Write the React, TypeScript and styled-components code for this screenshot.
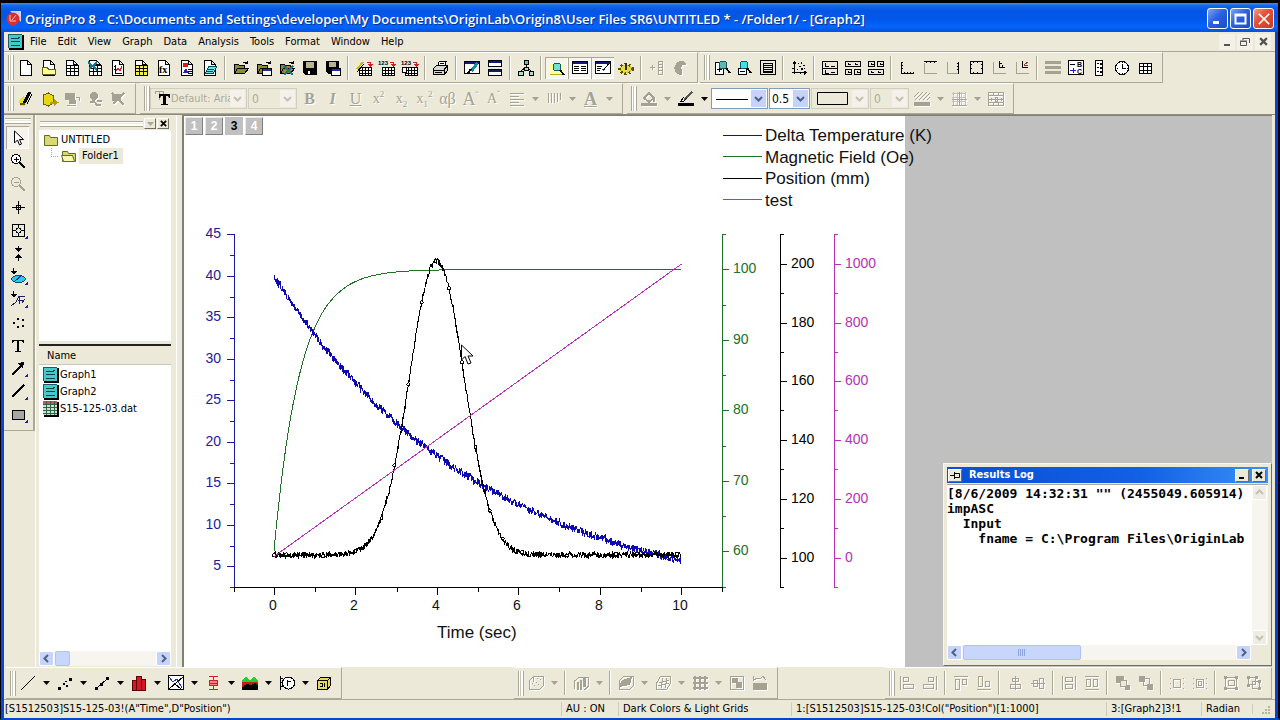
import React from 'react';
import styled, { createGlobalStyle, css } from 'styled-components';

const face = '#ece9d8';
const shade = '#aca899';
const uiFont = '"DejaVu Sans Condensed", "Liberation Sans", sans-serif';

const Global = createGlobalStyle`
  * { box-sizing: border-box; }
  body { margin: 0; background: #000; font: 11px/14px ${uiFont}; color: #000; }
  button, select { font: inherit; color: inherit; padding: 0; margin: 0; border: 0; background: none; }
  svg { display: block; flex: none; }
`;

/* ---------- window frame ---------- */

const Frame = styled.div`
  display: flex;
  flex-direction: column;
  height: 100vh;
  min-height: 560px;
  background: ${face};
  border-style: solid;
  border-color: #000 #000 #0b44c4;
  border-width: 3px 2px 2px 1px;
  box-shadow: inset 3px 0 #0b44d8, inset -3px 0 #0b3fd0;
  padding: 0 3px;
  overflow: hidden;
`;

const TitleBar = styled.header`
  display: flex;
  align-items: center;
  gap: 4px;
  height: 29px;
  flex: none;
  margin: 0 -3px;
  padding: 2px 4px 0 5px;
  background: linear-gradient(#3a8cf8 0, #1464e8 3px, #0455e4 8px, #0258ea 16px, #0464fc 24px, #0354e0 28px);
`;

const TitleText = styled.h1`
  flex: 1;
  margin: 0;
  font: 600 13px/18px "Open Sans", sans-serif;
  color: #fff;
  text-shadow: 1px 1px #0a2f8c;
  white-space: nowrap;
  overflow: hidden;
`;

const CaptionGroup = styled.div`
  display: flex;
  gap: 2px;
`;

const Caption = styled.button<{ $close?: boolean }>`
  width: 21px;
  height: 21px;
  display: grid;
  place-items: center;
  border: 1px solid #fff;
  border-radius: 3px;
  background: ${p => (p.$close
    ? 'linear-gradient(135deg, #f0a088, #e0533a 40%, #c83c1c)'
    : 'linear-gradient(135deg, #7fa6f4, #2c62dc 45%, #1c4cc8)')};
`;

const MenuBar = styled.nav`
  display: flex;
  align-items: center;
  gap: 1px;
  height: 20px;
  flex: none;
  padding: 0 4px;
  border-bottom: 1px solid ${shade};
`;

const MenuItem = styled.button`
  padding: 0 5px;
  line-height: 18px;
`;

const ChildButtons = styled.div`
  display: flex;
  gap: 2px;
  margin-left: auto;
`;

const ChildButton = styled.button`
  width: 16px;
  height: 16px;
  display: grid;
  place-items: center;
  background: #f4f2e8;
`;

/* ---------- toolbars ---------- */

const ToolRow = styled.div<{ $ruled?: boolean; $tall?: boolean }>`
  display: flex;
  flex: none;
  height: ${p => (p.$tall ? 32 : 31)}px;
  ${p => p.$ruled && css`border-bottom: 1px solid #8f8c7e;`}
`;

const Bar = styled.div<{ $gap?: number; $end?: boolean }>`
  display: flex;
  align-items: center;
  padding: 0 6px 0 4px;
  margin-left: ${p => (p.$end ? 'auto' : `${p.$gap || 0}px`)};
  margin-right: ${p => (p.$end ? 3 : 0)}px;
  border-top: 1px solid #fff;
  border-right: 1px solid ${shade};
  border-bottom: 1px solid ${shade};
  flex: none;
`;

const Grip = styled.span`
  width: 6px;
  height: 25px;
  flex: none;
  border: solid ${shade};
  border-width: 0 1px;
  box-shadow: inset 1px 0 #fff, inset -2px 0 #fff, inset -3px 0 #c9c5b4;
`;

const Divider = styled.span`
  width: 2px;
  height: 24px;
  margin: 0 3px;
  flex: none;
  border-left: 1px solid ${shade};
  border-right: 1px solid #fff;
`;

const Tool = styled.button<{ $pressed?: boolean; $off?: boolean }>`
  width: 23px;
  height: 22px;
  display: grid;
  place-items: center;
  flex: none;
  ${p => p.$pressed && css`
    background: #f6f4ec;
    box-shadow: inset 1px 1px ${shade}, inset -1px -1px #fff;
  `}
  ${p => p.$off && css`svg { filter: drop-shadow(1px 1px 0 #fff); }`}
`;

const Drop = styled.button`
  width: 14px;
  height: 22px;
  display: grid;
  place-items: center;
  flex: none;
`;

const Combo = styled.label<{ $w: number; $off?: boolean }>`
  position: relative;
  display: flex;
  align-items: center;
  width: ${p => p.$w}px;
  height: 21px;
  margin-right: 1px;
  flex: none;
  border: 1px solid ${p => (p.$off ? '#d2cebd' : '#7f9db9')};
  background: ${p => (p.$off ? face : '#fff')};
  color: ${p => (p.$off ? shade : '#000')};
`;

const ComboSelect = styled.select<{ $pad: number; $big?: boolean }>`
  appearance: none;
  flex: 1;
  min-width: 0;
  height: 19px;
  padding-left: ${p => p.$pad}px;
  font-size: ${p => (p.$big ? 12 : 11)}px;
  outline: 0;
  opacity: 1;
`;

const ComboArrow = styled.span<{ $off?: boolean }>`
  width: 15px;
  height: 17px;
  margin-right: 1px;
  flex: none;
  display: grid;
  place-items: center;
  pointer-events: none;
  background: ${p => (p.$off ? '#f3f1e9' : '#c5d3fb')};
`;

const Sample = styled.span`
  position: absolute;
  left: 4px;
  top: 1px;
  pointer-events: none;
`;

/* ---------- work area ---------- */

const Body = styled.main`
  display: flex;
  flex: 1;
  min-height: 0;
`;

const ToolBox = styled.div`
  display: flex;
  flex-direction: column;
  align-items: center;
  align-self: flex-start;
  width: 31px;
  padding: 3px 2px 5px 0;
  border-right: 2px solid ${shade};
  border-bottom: 1px solid ${shade};
  flex: none;
`;

const FlatGrip = styled.span<{ $grow?: boolean }>`
  ${p => (p.$grow ? css`flex: 1;` : css`width: 26px; margin-bottom: 2px;`)}
  height: 6px;
  border: solid ${shade};
  border-width: 1px 0;
  box-shadow: inset 0 1px #fff, inset 0 -2px #fff;
`;

const BoxTool = styled(Tool)`
  height: 23px;
`;

const Explorer = styled.aside`
  display: flex;
  flex-direction: column;
  width: 142px;
  padding: 2px 5px 1px 3px;
  border-left: 1px solid #fff;
  border-right: 1px solid #fff;
  flex: none;
`;

const ExplorerHead = styled.div`
  display: flex;
  align-items: center;
  gap: 1px;
  height: 13px;
  padding: 0 2px 0 1px;
  flex: none;
`;

const TinyButton = styled.button`
  width: 12px;
  height: 11px;
  display: grid;
  place-items: center;
  border: 1px solid;
  border-color: #fff #716f64 #716f64 #fff;
`;

const Tree = styled.ul`
  list-style: none;
  margin: 0;
  padding: 2px 0 0 4px;
  height: 211px;
  flex: none;
  background: #fff;
`;

const TreeItem = styled.li<{ $child?: boolean }>`
  display: flex;
  align-items: center;
  gap: 2px;
  height: 16px;
  padding-left: ${p => (p.$child ? 8 : 0)}px;
`;

const Selected = styled.span`
  background: ${face};
  padding: 1px 4px 1px 3px;
`;

const NameHeader = styled.div`
  margin-top: 3px;
  padding-left: 8px;
  height: 21px;
  line-height: 19px;
  flex: none;
  border-top: 2px solid #222;
  border-bottom: 1px solid #cbc7b8;
`;

const FileList = styled.ul`
  list-style: none;
  margin: 0;
  padding: 1px 0 0 4px;
  flex: 1;
  min-height: 0;
  overflow: hidden;
  background: #fff;
`;

const FileItem = styled.li`
  display: flex;
  align-items: center;
  gap: 1px;
  height: 17px;
`;

const Scroll = styled.div<{ $vertical?: boolean }>`
  display: flex;
  flex-direction: ${p => (p.$vertical ? 'column' : 'row')};
  justify-content: space-between;
  flex: none;
  ${p => (p.$vertical ? css`width: 16px;` : css`height: 15px;`)}
  background: #f6f5ef;
`;

const ScrollButton = styled.button<{ $off?: boolean }>`
  width: 15px;
  height: 15px;
  display: grid;
  place-items: center;
  flex: none;
  border: 1px solid #fff;
  border-radius: 2px;
  background: ${p => (p.$off ? '#efede3' : '#c6d3fb')};
`;

const Thumb = styled.span<{ $w: number }>`
  width: ${p => p.$w}px;
  margin: 0 auto 0 1px;
  display: grid;
  place-items: center;
  border: 1px solid #b0c2f4;
  border-radius: 2px;
  background: #c8d6fb;
`;

const Workspace = styled.section`
  position: relative;
  display: flex;
  flex: 1;
  min-width: 0;
  margin: 0 3px 0 5px;
  border: solid #808074;
  border-width: 1px 0 0 2px;
  background: #c0c0c0;
  overflow: hidden;
`;

const GraphPage = styled.div`
  flex: none;
  width: 721px;
  background: #fff;
`;

const LayerTabs = styled.div`
  position: absolute;
  left: 1px;
  top: 1px;
  display: flex;
  gap: 2px;
`;

const LayerTab = styled.button<{ $on?: boolean }>`
  width: 18px;
  height: 18px;
  font: 700 12px/16px "Liberation Sans", sans-serif;
  color: ${p => (p.$on ? '#000' : '#fff')};
  background: #c0c0c0;
  border: 1px solid;
  border-color: ${p => (p.$on ? '#c0c0c0' : '#e8e8e8 #808080 #808080 #e8e8e8')};
`;

const LogWindow = styled.section`
  position: absolute;
  right: 0;
  bottom: 1px;
  width: 329px;
  height: 203px;
  display: flex;
  flex-direction: column;
  padding: 3px 3px 5px 3px;
  background: ${face};
  border: 1px solid;
  border-color: #f8f7f2 #716f64 #716f64 #f8f7f2;
`;

const LogTitle = styled.header`
  display: flex;
  align-items: center;
  gap: 3px;
  height: 16px;
  padding: 0 2px 0 1px;
  flex: none;
  color: #fff;
  font-weight: 700;
  background: linear-gradient(90deg, #0a4fd4, #1260e4 60%, #3a90f8);
`;

const LogName = styled.h2`
  flex: 1;
  margin: 0 0 0 4px;
  font: 700 11px/14px ${uiFont};
`;

const LogButton = styled.button`
  width: 14px;
  height: 13px;
  display: grid;
  place-items: center;
  background: ${face};
  border: 1px solid;
  border-color: #fff #716f64 #716f64 #fff;
`;

const LogBody = styled.div`
  display: flex;
  flex: 1;
  min-height: 0;
  margin-top: 1px;
  border-top: 1px solid ${shade};
  background: #fff;
`;

const LogText = styled.pre`
  flex: 1;
  min-width: 0;
  margin: 0;
  padding: 1px 0;
  overflow: hidden;
  font: 700 13px/15px "DejaVu Sans Mono", monospace;
`;

const LogFoot = styled.div`
  padding-right: 17px;
`;

const StatusBar = styled.footer`
  display: flex;
  align-items: center;
  height: 19px;
  flex: none;
  border-top: 1px solid ${shade};
  padding: 0 1px;
  white-space: nowrap;
`;

const Status = styled.span<{ $w?: number }>`
  ${p => (p.$w ? css`width: ${p.$w}px; border-left: 1px solid #d0ccbc; padding-left: 4px;` : css`flex: 1;`)}
`;

/* ---------- icons ---------- */

type LineProps = { d: string; c?: string; f?: string; w?: number };
const L = ({ d, c = '#000', f = 'none', w = 1 }: LineProps) => (
  <path d={d} stroke={c} fill={f} strokeWidth={w} />
);
const F = ({ d, c = '#000' }: { d: string; c?: string }) => <path d={d} fill={c} />;
const G = '#a5a294';

const page = <L d="M2.5 .5h7l4 4v11h-11z M9.5 .5v4h4" f="#fff" />;
const pageGrid = (f: string) => (
  <>{page}<L d="M2.500 5.500h12v10h-12z" f={f} /><L d="M2 8.500h12M2 11.500h12M6.500 5v10M10.500 5v10" /></>
);
const folder = <L d="M1.500 13.500v-9h4l1 1h5v3M1.500 13.500l3-5h11l-4 5z" f="#8c8c2c" />;
const openArrow = <L d="M9.500 3.500c1-2 4-2 4.500 0M12 3.500h3M14.500 1v3" />;
const teal = '#107890';
const bigX = <L d="M5 6l9 9M14 6l-9 9" c={teal} w={2} />;
const sheet = <L d="M3.500 7.500h12v8h-12zM3 10.500h12M3 13.500h12M6.500 7v9M9.500 7v9M12.500 7v9" f="#fff" />;
const redArrow = <><L d="M11 2.500h3.500v2" c="#d02020" /><F d="M12 4h5l-2.500 3z" c="#d02020" /></>;
const digits = <text x="-1" y="5" fontSize="6" fontWeight="700" fontFamily="Liberation Sans, sans-serif">123</text>;
const win = (x: number, y: number) => (
  <><rect x={x + 0.5} y={y + 0.5} width="9" height="7" fill="#fff" stroke="#000" /><rect x={x + 1} y={y + 1} width="8" height="2" fill="#2030a0" /></>
);
const bigWin = <><L d="M.5 1.500h15v12H.500z" f="#fff" /><F d="M1 2h14v2H1z" c="#101878" /></>;
const lens = (x: number, y: number, c: string) => (
  <><circle cx={x} cy={y} r="4" fill={c} stroke="#105868" /><L d={`M${x + 3} ${y + 3}l4 5`} w={2} /></>
);
const corner = 'M2.500 2v11.500H15';
const cornerTicks = 'M3 4.500h2M3 7.500h2M3 10.500h2M5.500 11v2M8.500 11v2M11.500 11v2';

const art: Record<string, React.ReactNode> = {
  new: page,
  folder: <>{page}<L d="M1.500 14.500v-7h5l1 2h7v5z" f="#ffff90" c="#60601c" /></>,
  sheet: pageGrid('#fff'),
  excel: <>{pageGrid('#fff')}<L d="M1 2l9 8M10 2L2 9" c={teal} w={2} /></>,
  graph: <>{page}<L d="M5.500 5v8H12M4 6.500h2M4 9.500h2" /><L d="M6 10.500l2-2l2 2l2-4" c="#c82828" /></>,
  matrix: pageGrid('#f4f050'),
  fx: <>{page}<text x="3" y="13" fontSize="10" fontWeight="700" fontFamily="Liberation Serif, serif">fx</text></>,
  layout: <>{page}<F d="M4 3h5v4H4z" c="#e01818" /><F d="M4 13l3-5l3 5z" c="#1828b0" /><L d="M9 9.500h4M9 11.500h4M9 13.500h4" /></>,
  notes: <>{page}<L d="M3.500 13.500l3-7h8l-3 7z" f="#70e0e8" c="#084858" /><L d="M6 9.500h6M5 11.500h6" c="#084858" /></>,
  open: <>{folder}{openArrow}</>,
  openTpl: <>{folder}{openArrow}{win(6, 8)}</>,
  openXls: <>{folder}{openArrow}{bigX}</>,
  save: <><F d="M1 1h14v14H3l-2-2z" /><F d="M4 2h8v6H4z" c="#b8b48c" /><F d="M6 11h2v3H6z" c="#fff" /></>,
  saveTpl: <><F d="M1 1h13v13H3l-2-2z" /><F d="M4 2h7v5H4z" c="#b8b48c" />{win(6, 8)}</>,
  wizard: <>{sheet}{redArrow}<L d="M1 9l6-7" c="#c8b820" w={2} /><L d="M1 12l7-8" /></>,
  imp: <>{sheet}{redArrow}{digits}</>,
  imp2: <>{sheet}<L d="M.500 7.500h4v5h-4z" f="#fff" />{redArrow}{digits}</>,
  print: <><L d="M4.500 6l2-5h7l-2 5" f="#fff" /><L d="M.500 8.500l3-3h11v5l-3 4H.500z" f="#d8d8d0" /><L d="M1 10.500h10M11.500 14V9l3-3M7 3.500h4M2 12.500h7" /></>,
  redraw: <>{bigWin}<L d="M13.500 3l-6 8" c="#1888a0" w={3} /><L d="M7 9l-3 4" w={2} /></>,
  dup: <><L d="M1.500 .500h13v6h-13zM1.500 9.500h13v6h-13z" f="#fff" /><F d="M2 1h12v2H2zM2 10h12v2H2z" c="#101878" /></>,
  tree: <><L d="M8.500 5v2M8 7l-5 4M8 7l5 4" /><L d="M6.500 .500h4v4h-4z" f="#60c8a8" /><L d="M6.500 7.500h4v3h-4zM.500 11.500h5v4h-5zM11.500 11.500h4v4h-4z" f="#a8e0c8" /></>,
  find: <><F d="M1 4h14v9H1z" c="#ffffa0" /><L d="M1 14.500h15" c="#b8a820" />{lens(8, 7, '#70e0d8')}</>,
  log: <>{bigWin}<L d="M2 6.500h5M9 6.500h5M2 8.500h5M9 8.500h5M2 10.500h5M9 10.500h5" /></>,
  script: <>{bigWin}<L d="M2 6.500h5M2 8.500h4M2 10.500h3" /><L d="M13.500 4l-5 6" w={1} /><L d="M7 9l2 2" c={teal} /></>,
  gear: <><ellipse cx="8" cy="9" rx="6.500" ry="4.500" fill="#d8cc28" stroke="#585008" strokeDasharray="2 2" strokeWidth="3" /><ellipse cx="8" cy="9" rx="5" ry="3.500" fill="#e8dc38" /><F d="M7 3h2v7H7z" c="#302c08" /></>,
  addCol: <><L d="M1 7.500h5M3.500 5v5M9.500 1.500h4v13h-4zM9 4.500h5M9 7.500h5M9 10.500h5" c={G} /></>,
  ring: <F d="M13 2a7 7 0 1 0-3 13v-5a3 3 0 1 1 5-3z" c={G} />,
  zoomIn: <><L d="M1.500 2.500h5l3 3v9h-8zM3 9.500h5M5.500 7v5" f="#fff" />{lens(9, 5, '#60b8b0')}</>,
  zoomOut: <><L d="M1.500 8.500h8v6h-8zM3 11.500h5" f="#fff" />{lens(7, 5, '#40e0e8')}</>,
  whole: <><L d="M.500 .500h15v14H.500zM3.500 3.500h9v9h-9z" /><L d="M4 5.500h8M4 7.500h8M4 9.500h8M4 11.500h8" /></>,
  rescale: <><L d="M3.500 1v13M1 12.500h14M2 3.500l1.500-2l1.500 2M13 11l2 1.500l-2 2M1 8.500h2M9.500 12v2" /><F d="M7 3h1v1h-1zM10 2h1v2h-1zM12 5h2v1h-2zM8 6h2v1H8zM6 9h1v1h-1zM10 8h2v2h-2zM13 8h1v1h-1z" /></>,
  lay1: <><L d="M.500 1.500h15v13H.500zM0 8.500h15" /><L d="M3.500 3v3h3M9 6.500h4M3.500 10v3h3M9 12.500h4" /></>,
  lay2: <><L d="M.500 1.500h15v5H.500zM.500 9.500h6v5h-6zM9.500 9.500h6v5h-6z" /><L d="M3.500 3v1.500h2M10.500 3v1.500h2M3.500 11v1.500h2M12.500 11v1.500h2" /></>,
  lay3: <><L d="M.500 1.500h6v5h-6zM9.500 1.500h6v5h-6zM.500 9.500h15v5H.500z" /><L d="M3.500 3v1.500h2M12.500 3v1.500h2M3.500 11v1.500h2M10.500 11v1.500h2" /></>,
  axBL: <><L d="M2.500 2v11.500H15" /><F d="M3 2h1v1H3zM3 5h1v1H3zM3 8h1v1H3zM5 12h1v1H5zM8 12h1v1H8zM11 12h1v1h-1zM14 12h1v1h-1z" /></>,
  axT: <><L d="M2 1.500h13" /><F d="M4 2h1v1H4zM8 2h1v1H8zM12 2h1v1h-1z" /><L d="M2.500 3v11M3 13.500h12" c={G} /></>,
  axR: <><L d="M13.500 2v12" /><F d="M12 3h1v1h-1zM12 6h1v1h-1zM12 9h1v1h-1z" /><L d="M2.500 2v11.500H13" c={G} /></>,
  axBox: <><L d="M2.500 1.500h12v12h-12z" /><F d="M3 4h1v1H3zM3 8h1v1H3zM13 4h1v1h-1zM13 8h1v1h-1zM5 12h1v1H5zM9 12h1v1H9zM5 2h1v1H5zM9 2h1v1H9z" /></>,
  axIn: <><L d={corner} c={G} /><L d="M8.500 1v6H14M9 3.500h2M11.500 5v2" /></>,
  axIn2: <><L d={corner} c={G} /><L d="M8.500 1v6H14" /><L d="M10 5l4-3M10 6l4-1" c="#a03030" /></>,
  legend: <F d="M0 1h16v3H0zM0 6h16v3H0zM0 11h16v3H0z" c={G} />,
  bc: <><L d="M.500 .500h15v14H.500z" f="#fff" /><L d="M2 4.500h5" /><L d="M2 10.500h6M5.500 8v5" c="#2020c0" /><text x="9" y="7" fontSize="7" fontWeight="700" fontFamily="Liberation Sans, sans-serif">B</text><text x="9" y="14" fontSize="7" fontWeight="700" fontFamily="Liberation Sans, sans-serif">C</text></>,
  scale: <><L d="M4.500 .500h7v15h-7z" f="#fff" /><L d="M6 3.500h2M6 7.500h2M6 11.500h2" /><F d="M9 3h2v2H9zM9 7h2v2H9zM9 11h2v2H9z" /></>,
  clock: <><circle cx="8" cy="8" r="6.500" fill="#fff" stroke="#000" /><L d="M8.500 4v4.500h3M8.500 2v1M8.500 13v1M3 8.500h1M13 8.500h1" /></>,
  table: <L d="M2.500 3.500h12v10h-12zM2 6.500h12M2 10.500h12M6.500 3v10M10.500 3v10" f="#fff" />,
  brush: <><F d="M1 9l4-4l5 2l-3 8H2z" c="#e8e020" /><L d="M12 1L6 12" w={3} /><L d="M14 3L9 13" /><L d="M2 13h5" c="#605808" w={2} /></>,
  bucket: <><F d="M2 4l6-2l5 3v6l-5 4l-6-2z" c="#e8d810" /><L d="M2.500 4v9l5 2l5-3V5L7.500 2z" c="#686010" /><L d="M9 11.500h6M13 9l3 2.500l-3 2.500" c="#b0a000" w={2} /></>,
  maskA: <><F d="M1 2h10v7H1zM5 9h7v4H5z" c={G} /><L d="M3 14.500h9M12 6h3v4" c={G} /></>,
  maskB: <><circle cx="7" cy="5" r="4" fill={G} /><L d="M6 9l4 5h4M3 10.500h4M10 9.500h5" c={G} w={2} /></>,
  maskC: <><F d="M2 3h9v7H2z" c={G} /><L d="M2 2l12 12M14 2L3 13" c={G} w={2} /></>,
  align: <L d="M1 2.500h14M1 5.500h9M1 8.500h14M1 11.500h9M1 14.500h14" c={G} />,
  vbars: <L d="M2.500 2v10M5.500 2v10M8.500 2v10M11.500 2v9M14.500 2v7" c={G} />,
  fill: <><L d="M3 7l5-5l5 5l-5 4z" c={G} w={2} /><L d="M13 7v4" c={G} w={2} /><F d="M0 12h16v3H0z" c={G} /></>,
  pen: <><L d="M14 1L6 9" w={2} c="#555" /><L d="M6 6l-3 4h3l3-3" /><F d="M0 12h16v3H0z" /></>,
  hatch: <><L d="M0 6l5-5M1 9l8-8M5 9l8-8M9 9l7-7M13 9l3-3" c={G} /><F d="M0 11h16v4H0z" c={G} /></>,
  borders: <><L d="M2.500 1v13M6.500 1v13M10.500 1v13M14.500 1v13M1 2.500h14M1 6.500h14M1 10.500h14" c="#c4c1b2" /><L d="M8.500 1v14M1 8.500h15M1 14.500h15" c={G} /></>,
  merge: <><L d="M.500 1.500h15v13H.500zM0 4.500h16M0 11.500h16M5.500 1v3M10.500 1v3M5.500 12v3M10.500 12v3" c={G} /><L d="M1 8.500h14M3 7v3M13 7v3M7 6.500h2v4H7z" c={G} /></>,
  pointer: <path d="M4.500 1v12l3-3l2 5l2-1l-2-4.500h4z" fill="#fff" stroke="#000" shapeRendering="auto" />,
  zoomP: <><circle cx="6" cy="6" r="4.500" fill="#fff" stroke="#000" /><L d="M4 6.500h5M6.500 4v5" /><L d="M10 10l5 5" w={2} /></>,
  zoomM: <><circle cx="6" cy="6" r="4.500" fill="none" stroke={G} /><L d="M4 6.500h5" c={G} /><L d="M10 10l5 5" c={G} w={2} /></>,
  cross: <L d="M8.500 2v13M2 8.500h13M6.500 6.500h4v4h-4z" />,
  reader: <L d="M2.500 2.500h12v12h-12zM8.500 3v3M8.500 11v4M3 8.500h3M11 8.500h4M6.500 8v-1.500H8M9 6.500h1.500V8M10.500 9v1.500H9M8 10.500H6.500V9" />,
  select: <><L d="M8.500 1v4M8.500 11v5" /><F d="M5 3h7L8.500 7zM5 13h7L8.500 9z" /></>,
  region: <><F d="M1 3h6l-3 4zM3 0h1v4h-1z" /><ellipse cx="8.500" cy="11" rx="7" ry="3.500" fill="#20d0e8" stroke="#104878" /><L d="M4 14l8-7" c="#1818a0" /></>,
  curve: <><F d="M1 3h6l-3 4zM3 0h1v4h-1z" /><L d="M1 15l5-4l3-6h6M8 9.500h6M9.500 5v8M12 12l3-4" c="#202060" /></>,
  dots: <F d="M3 8h2v2H3zM7 4h2v2H7zM12 5h2v2h-2zM7 12h2v2H7zM12 11h2v2h-2z" />,
  text: <F d="M2 3h12v3h-1l-1-2H9v10h2v1H5v-1h2V4H4L3 6H2z" />,
  arrow: <><L d="M2 15L12 5" w={2} /><F d="M14 2l-1 7l-6-6z" /></>,
  line: <L d="M2 14L14 2" w={2} />,
  rect: <L d="M2.500 4.500h12v9h-12z" f="#a8a8a0" />,
  pLine: <L d="M1 15L15 1" />,
  pDots: <F d="M1 12h3v3H1zM6 8h2v2H6zM9 10h2v2H9zM12 3h3v3h-3zM8 6h2v1H8z" />,
  pBoth: <><L d="M2 14L14 3" /><F d="M1 12h3v3H1zM6 8h3v3H6zM12 2h3v3h-3z" /></>,
  bars: <L d="M1.500 5.500h4v10h-4zM5.500 1.500h5v14h-5zM10.500 4.500h4v11h-4z" c="#600000" f="#d01828" />,
  multi: <><L d="M.500 .500h15v14H.500z" f="#fff" /><L d="M1 2l4 5l4-3l5 9" c="#2030c0" /><L d="M1 14L15 2M6 8l8 7" /></>,
  box: <><L d="M8.500 1v14M4 1.500h9M4 14.500h9" c="#d02020" /><L d="M4.500 5.500h8v5h-8z" c="#d02020" f="#ff8080" /><L d="M4 8.500h9" c="#d02020" /></>,
  area: <><F d="M0 6l4-5l4 5l4-5l4 5v4H0z" c="#20d030" /><F d="M0 7h16v5H0z" c="#c81818" /><F d="M0 12l5-3l4 1l4-2l3 3v4H0z" /></>,
  polar: <><L d="M1.500 1v14M2 3.500h2M2 7.500h2M2 11.500h2" /><circle cx="9.500" cy="8" r="6" fill="#fff" stroke="#000" /><L d="M8.500 5v6M8.500 6.500h3" /></>,
  stack: <><L d="M1.500 5.500l3-3h10v8l-3 4h-10z" f="#e8d860" /><L d="M1.500 5.500h10v9M11.500 5.500l3-3M4 8.500h2v3H4M8.500 8v4" /></>,
  d3a: <L d="M1.500 5.500l4-4h10v9l-4 4h-10zM4 8h1M8 7h1M6 10h1M10 9h1M12 4h1M9 3h1M5.500 2v5" c={G} />,
  d3b: <><L d="M1.500 14V6l5-4h9v9l-4 4" c={G} /><F d="M4 7h2v8H4zM7 5h2v10H7zM10 3h3v9h-3z" c={G} /></>,
  d3c: <><F d="M1 12l3-7l10-3l-2 8z" c={G} /><L d="M1.500 5.500l4-4h10v9l-4 4h-10z" c={G} /></>,
  d3d: <L d="M1.500 8.500l4-7h10v7l-4 6h-10zM4 8l10-3M3 11l11-3M8 3L6 13M12 3l-2 10" c={G} />,
  mesh: <L d="M1 3h15M1 8h15M1 13h15M3 1v14M8 1v14M13 1v14" c={G} w={2} />,
  img: <><L d="M1.500 1.500h13v13h-13z" c={G} /><F d="M3 3h6v5H3zM7 7h6v6H7z" c={G} /></>,
  prof: <><F d="M1 8h14v7H1z" c={G} /><L d="M1.500 1v5M2 5l3-2l3 1l3-3l3 4" c={G} /></>,
  alL: <L d="M1.500 1v14M4.500 2.500h5v4h-5zM4.500 9.500h10v4h-10z" c={G} />,
  alR: <L d="M14.500 1v14M6.500 2.500h5v4h-5zM1.500 9.500h10v4h-10z" c={G} />,
  alT: <L d="M1 1.500h14M2.500 4.500h4v10h-4zM9.500 4.500h4v5h-4z" c={G} />,
  alB: <L d="M1 14.500h14M2.500 1.500h4v10h-4zM9.500 6.500h4v5h-4z" c={G} />,
  alV: <L d="M8.500 1v14M5.500 3.500h6v3h-6zM3.500 9.500h10v4h-10z" c={G} />,
  alH: <L d="M1 8.500h14M3.500 5.500h4v6h-4zM9.500 3.500h4v10h-4z" c={G} />,
  szW: <L d="M1.500 1v14M14.500 1v14M4.500 2.500h7v4h-7zM4.500 9.500h7v4h-7z" c={G} />,
  szH: <L d="M1 1.500h14M1 14.500h14M2.500 4.500h4v7h-4zM9.500 4.500h4v7h-4z" c={G} />,
  front: <><F d="M1 1h8v7H1zM10 10h5v5h-5z" c={G} /><L d="M5.500 5.500h6v6h-6z" c={G} f={face} /></>,
  back: <><F d="M1 1h6v6H1zM9 9h6v6H9z" c={G} /><L d="M5.500 3.500h6v7h-6z" c={G} /></>,
  fntA: <><L d="M4.500 4.500h7v8h-7z" c={G} /><L d="M1 3h1M1 8h1M1 13h1M14 3h1M14 8h1M14 13h1" c={G} /></>,
  fntB: <><L d="M4.500 4.500h7v8h-7zM6.500 6.500h3v4h-3z" c={G} /><L d="M1 3h1M1 8h1M1 13h1M14 3h1M14 8h1M14 13h1" c={G} /></>,
  group: <><L d="M2.500 2.500h11v11h-11zM5.500 5.500h6v5h-6z" c={G} /><F d="M1 1h3v3H1zM12 1h3v3h-3zM1 12h3v3H1zM12 12h3v3h-3z" c={G} /></>,
  ungroup: <><L d="M2.500 2.500h7v7h-7zM6.500 6.500h7v7h-7z" c={G} /><F d="M1 1h3v3H1zM9 1h3v3H9zM1 9h3v3H1zM12 5h3v3h-3zM12 12h3v3h-3z" c={G} /></>,
};

const Icon = ({ name, flyout }: { name: string; flyout?: boolean }) => (
  <svg width="18" height="18" viewBox="-1 -1 18 18" shapeRendering="crispEdges" aria-hidden="true" overflow="visible">
    {art[name]}
    {flyout && <path d="M18 13v4h-4z" fill="#2020a0" />}
  </svg>
);

const Triangle = ({ c = '#000' }: { c?: string }) => (
  <svg width="7" height="4" viewBox="0 0 7 4" aria-hidden="true"><path d="M0 0h7L3.500 4z" fill={c} /></svg>
);

type Dir = 'left' | 'right' | 'up' | 'down';
const turn: Record<Dir, number> = { down: 0, left: 90, up: 180, right: 270 };
const Chevron = ({ dir = 'down', c = '#4d6185' }: { dir?: Dir; c?: string }) => (
  <svg width="9" height="9" viewBox="0 0 9 9" aria-hidden="true">
    <path d="M1 3l3.500 3.500L8 3" fill="none" stroke={c} strokeWidth="2" transform={`rotate(${turn[dir]} 4.500 4.500)`} />
  </svg>
);

const Cross = ({ c = '#000', s = 8, w = 2 }: { c?: string; s?: number; w?: number }) => (
  <svg width={s} height={s} viewBox="0 0 8 8" aria-hidden="true"><path d="M1 1l6 6M7 1L1 7" stroke={c} strokeWidth={w} /></svg>
);

const Glyph = styled.span<{ $size?: number; $b?: boolean; $i?: boolean; $u?: boolean }>`
  font-family: "Liberation Serif", serif;
  font-size: ${p => p.$size || 16}px;
  line-height: 20px;
  font-weight: ${p => (p.$b ? 700 : 400)};
  font-style: ${p => (p.$i ? 'italic' : 'normal')};
  text-decoration: ${p => (p.$u ? 'underline' : 'none')};
  color: ${G};
  text-shadow: 1px 1px #fff;
  white-space: nowrap;
  sub, sup { font-size: 9px; line-height: 0; }
`;

/* "name" is a button, "name+" carries a drop arrow, "name!" is pressed, "|" a divider */
const Tools = ({ items, off }: { items: string; off?: boolean }) => (
  <>
    {items.split(' ').map((item, i) => {
      if (item === '|') return <Divider key={i} />;
      const name = item.replace(/[+!]/, '');
      return (
        <React.Fragment key={i}>
          <Tool aria-label={name} $pressed={item.endsWith('!')} $off={off}><Icon name={name} /></Tool>
          {item.endsWith('+') && <Drop aria-label={`${name} options`}><Triangle c={off ? G : '#000'} /></Drop>}
        </React.Fragment>
      );
    })}
  </>
);

type PickProps = { label: string; w: number; value: string; off?: boolean; pad?: number; big?: boolean; children?: React.ReactNode };
const Pick = ({ label, w, value, off, pad = 3, big, children }: PickProps) => (
  <Combo $w={w} $off={off}>
    {children}
    <ComboSelect aria-label={label} $pad={pad} $big={big} defaultValue={value}><option>{value}</option></ComboSelect>
    <ComboArrow $off={off}><Chevron c={off ? '#c4c1b2' : '#4d6185'} /></ComboArrow>
  </Combo>
);

/* ---------- chart ---------- */

const noise = (seed: number) => {
  let s = seed;
  return () => {
    s = (s * 1103515245 + 12345) % 2147483648;
    return s / 2147483648 - 0.5;
  };
};

const trace = (n: number, fn: (t: number) => number, amp: number, seed: number) => {
  const r = noise(seed);
  return Array.from({ length: n + 1 }, (_, i) => {
    const t = (i * 10) / n;
    return `${i ? 'L' : 'M'}${(274 + t * 40.7).toFixed(1)} ${(fn(t) + r() * amp).toFixed(1)}`;
  }).join('');
};

const decay = trace(1000, t => 566 - (40 * Math.exp(-0.195 * t) - 5) * 8.29, 8, 7);
const rise = trace(200, t => 551 - 281.500 * (1 - Math.exp(-t / 0.635)), 0, 1);
const peakY = (t: number) => 555 - 294 * Math.exp(-((t - 4) ** 2) / 0.9);
const peak = trace(1000, peakY, 6, 23);
const markR = noise(5);
const marks = [0, 0.3, 1.2, 2, 2.64, 2.96, 3.3, 3.63, 3.97, 4.3, 4.62, 4.95, 5.3, 5.62, 6.1, 7.2, 8.4, 9.9]
  .map(t => [274 + t * 40.7, peakY(t) + markR() * 3]);

const blue = '#1c1c98';
const green = '#207028';
const magenta = '#b830b8';

type AxisProps = { x: number; color: string; side: 1 | -1; majors: [string, number][]; minors: number[] };
const Axis = ({ x, color, side, majors, minors }: AxisProps) => (
  <g>
    <path
      d={`M${x + 0.5} 234V588${majors.map(([, y]) => `M${x} ${y + 0.5}h${7 * side}`).join('')}${minors.map(y => `M${x} ${y + 0.5}h${4 * side}`).join('')}`}
      stroke={color} fill="none"
    />
    {majors.map(([text, y]) => (
      <text key={text} x={side > 0 ? x + 11 : x - 13} y={y + 4} fill={color} fontSize="14" textAnchor={side > 0 ? 'start' : 'end'}>{text}</text>
    ))}
  </g>
);

const ys = (start: number, step: number, n: number) => Array.from({ length: n }, (_, i) => Math.round(start + i * step));
const named = (labels: string[], start: number, step: number): [string, number][] =>
  labels.map((l, i) => [l, Math.round(start + i * step)]);

const legend: [string, string][] = [
  ['Delta Temperature (K)', '#1010a8'],
  ['Magnetic Field (Oe)', green],
  ['Position (mm)', '#000'],
  ['test', magenta],
];

const Chart = () => (
  <svg width="770" height="550" viewBox="184 116 770 550" overflow="visible" fontFamily="Liberation Sans, sans-serif" shapeRendering="crispEdges" role="img" aria-label="Graph2">
    {legend.map(([name, c], i) => (
      <g key={name}>
        <path d={`M723 ${Math.round(135.500 + i * 21.500) - 0.5}h39`} stroke={c} />
        <text x="765" y={Math.round(141 + i * 21.500)} fontSize="17" fill="#111">{name}</text>
      </g>
    ))}
    <Axis x={234} color={blue} side={-1} majors={named(['45', '40', '35', '30', '25', '20', '15', '10', '5'], 234, 41.500)} minors={ys(255, 41.500, 8).concat(587)} />
    <Axis x={722} color={green} side={1} majors={named(['100', '90', '80', '70', '60'], 269, 70.500)} minors={ys(234, 70.600, 6)} />
    <Axis x={780} color="#000" side={1} majors={named(['200', '180', '160', '140', '120', '100'], 264, 58.700)} minors={ys(234, 58.800, 7)} />
    <Axis x={834} color={magenta} side={1} majors={named(['1000', '800', '600', '400', '200', '0'], 264, 58.700)} minors={ys(234, 58.800, 7)} />
    <path d={`M234 587.500H723${[0, 1, 2, 3, 4, 5, 6].map(i => `M${Math.round(234 + i * 81.300) + 0.5} 588v4`).join('')}${[0, 1, 2, 3, 4, 5].map(i => `M${Math.round(274 + i * 81.400) + 0.5} 588v7`).join('')}`} stroke="#000" fill="none" />
    {[0, 2, 4, 6, 8, 10].map(v => (
      <text key={v} x={273 + Math.round(v * 40.700)} y="610" fontSize="14" fill="#111" textAnchor="middle">{v}</text>
    ))}
    <text x="437" y="638" fontSize="17" fill="#111">Time (sec)</text>
    <path d={rise} stroke={green} fill="none" />
    <path d={decay} stroke="#0c0cb0" fill="none" />
    <path d={peak} stroke="#000" fill="none" />
    {marks.map(([x, y], i) => <circle key={i} cx={x} cy={y} r="1.500" fill="#fff" stroke="#000" />)}
    <path d="M274 556.500L681.500 264" stroke={magenta} fill="none" />
    <path d="M461.500 345v15l3.500-3.500l3 7.500l3-1l-3-7h5z" fill="#fff" stroke="#000" shapeRendering="auto" />
  </svg>
);

const GraphIcon = () => (
  <svg width="16" height="16" viewBox="0 0 16 16" shapeRendering="crispEdges" aria-hidden="true">
    <path d="M1 1h15v15H1z" fill="#000" /><path d="M0 0h14v14H0z" fill="#48c8c8" />
    <path d="M0 .500h14M.500 0v14" stroke="#205868" /><path d="M3 5l3-1l3 1l3-2M3 8l3-1l3 1l3-1M3 11.500h9" stroke="#10404c" fill="none" />
  </svg>
);

const BookIcon = () => (
  <svg width="16" height="16" viewBox="0 0 16 16" shapeRendering="crispEdges" aria-hidden="true">
    <path d="M1 1h15v15H1z" fill="#000" /><path d="M0 0h14v14H0z" fill="#d0e0d0" />
    <path d="M0 0h14v3H0z" fill="#e04858" />
    <path d="M0 3.500h14M0 6.500h14M0 9.500h14M0 12.500h14M3.500 0v14M7.500 0v14M11.500 0v14" stroke="#2c6848" />
  </svg>
);

const FolderIcon = ({ open }: { open?: boolean }) => (
  <svg width="16" height="14" viewBox="0 0 16 14" aria-hidden="true">
    <path d="M1.500 12.500v-10h5l1 2h7v8z" fill="#d8d878" stroke="#686820" />
    {open && <path d="M.500 6.500h11l2 6h-11z" fill="#f8f8b0" stroke="#686820" />}
  </svg>
);

const boxTools = ['pointer', 'zoomP', 'zoomM', 'cross', 'reader+', 'select', 'region+', 'curve+', 'dots', 'text', 'arrow+', 'line+', 'rect+'];

export default function App() {
  return (
    <>
      <Global />
      <Frame>
        <TitleBar>
          <svg width="15" height="15" viewBox="0 0 15 15" aria-hidden="true">
            <path d="M4 0h11v11z" fill="#c8d8f0" /><circle cx="7" cy="8" r="6.500" fill="#d83030" />
            <path d="M4 4v6h6M6 9l4-5" stroke="#ffc0b8" fill="none" />
          </svg>
          <TitleText>OriginPro 8 - C:\Documents and Settings\developer\My Documents\OriginLab\Origin8\User Files SR6\UNTITLED * - /Folder1/ - [Graph2]</TitleText>
          <CaptionGroup>
            <Caption aria-label="Minimize"><svg width="13" height="13"><path d="M2 9h6v3H2z" fill="#fff" /></svg></Caption>
            <Caption aria-label="Maximize"><svg width="13" height="13"><path d="M1.500 2.500h10v9h-10zM1 3.500h11" fill="none" stroke="#fff" strokeWidth="2" /></svg></Caption>
            <Caption aria-label="Close" $close><Cross c="#fff" s={14} w={1} /></Caption>
          </CaptionGroup>
        </TitleBar>

        <MenuBar>
          <GraphIcon />
          {['File', 'Edit', 'View', 'Graph', 'Data', 'Analysis', 'Tools', 'Format', 'Window', 'Help'].map(m => <MenuItem key={m}>{m}</MenuItem>)}
          <ChildButtons>
            <ChildButton aria-label="Minimize graph"><svg width="10" height="10"><path d="M2 7h6v2H2z" fill="#555" /></svg></ChildButton>
            <ChildButton aria-label="Restore graph"><svg width="10" height="10"><path d="M3 1.500h6.500V6M3 1v2M.500 4.500h6v4h-6zM0 4h7" fill="none" stroke="#555" /></svg></ChildButton>
            <ChildButton aria-label="Close graph"><Cross c="#555" s={9} /></ChildButton>
          </ChildButtons>
        </MenuBar>

        <ToolRow>
          <Bar>
            <Grip />
            <Tools items="new folder sheet excel graph matrix fx layout notes | open openTpl openXls save saveTpl | wizard imp imp2 | print | redraw dup | tree | find! log! script! gear |" />
            <Tools off items="addCol ring" />
          </Bar>
          <Bar $gap={2}>
            <Grip />
            <Tools items="zoomIn zoomOut whole | rescale | lay1 lay2 lay3 | axBL axT axR axBox axIn axIn2 | legend bc scale clock table" />
          </Bar>
        </ToolRow>

        <ToolRow $ruled $tall>
          <Bar>
            <Grip />
            <Tools items="brush bucket" />
            <Tools off items="maskA maskB maskC" />
          </Bar>
          <Bar $gap={4}>
            <Grip />
            <Pick label="Font" w={97} value="Default: Arial" off pad={20}>
              <Sample><svg width="18" height="17" viewBox="0 0 18 17" aria-hidden="true"><path d="M0 1h9v3H8V2H5v8H4V2H1v2H0z" fill={G} /><path d="M4 4h11v4h-1l-1-2h-2v8h2v1H6v-1h2V6H6L5 8H4z" /></svg></Sample>
            </Pick>
            <Pick label="Font size" w={49} value="0" off pad={3} big />
            <Tool aria-label="Bold"><Glyph $b>B</Glyph></Tool>
            <Tool aria-label="Italic"><Glyph $b $i>I</Glyph></Tool>
            <Tool aria-label="Underline"><Glyph $u>U</Glyph></Tool>
            <Tool aria-label="Superscript"><Glyph $size={14}>x<sup>2</sup></Glyph></Tool>
            <Tool aria-label="Subscript"><Glyph $size={14}>x<sub>2</sub></Glyph></Tool>
            <Tool aria-label="Super-subscript"><Glyph $size={14}>x<sub>1</sub><sup>2</sup></Glyph></Tool>
            <Tool aria-label="Greek"><Glyph $size={16}>αβ</Glyph></Tool>
            <Tool aria-label="Increase font"><Glyph $size={18}>A<sup>ˆ</sup></Glyph></Tool>
            <Tool aria-label="Decrease font"><Glyph $size={14}>A<sup>ˇ</sup></Glyph></Tool>
            <Tools off items="align+ vbars+" />
            <Tool aria-label="Font color"><Glyph $b $u $size={18}>A</Glyph></Tool>
            <Drop aria-label="Font color options"><Triangle c={G} /></Drop>
          </Bar>
          <Bar $gap={4}>
            <Grip />
            <Tools off items="fill+" />
            <Tools items="pen+" />
            <Pick label="Line style" w={57} value="">
              <Sample><svg width="32" height="17"><path d="M0 9.500h32" stroke="#000" /></svg></Sample>
            </Pick>
            <Pick label="Line width" w={41} value="0.5" pad={2} big />
            <Pick label="Pattern" w={58} value="" off>
              <Sample><svg width="34" height="17"><path d="M1.500 2.500h30v12h-30z" fill="none" stroke="#000" /></svg></Sample>
            </Pick>
            <Pick label="Pattern width" w={39} value="0" off big />
            <Tools off items="hatch+ borders+ merge" />
          </Bar>
        </ToolRow>

        <Body>
          <ToolBox>
            <FlatGrip />
            {boxTools.map((t, i) => {
              const name = t.replace('+', '');
              return <BoxTool key={t} aria-label={name} $pressed={i === 0}><Icon name={name} flyout={t.endsWith('+')} /></BoxTool>;
            })}
          </ToolBox>

          <Explorer>
            <ExplorerHead>
              <FlatGrip $grow />
              <TinyButton aria-label="Roll up"><Triangle c={shade} /></TinyButton>
              <TinyButton aria-label="Close explorer"><Cross s={7} /></TinyButton>
            </ExplorerHead>
            <Tree>
              <TreeItem><FolderIcon />UNTITLED</TreeItem>
              <TreeItem $child>
                <svg width="8" height="16" aria-hidden="true"><path d="M.500 0v8M0 8.500h8" stroke="#aaa" strokeDasharray="1 1" /></svg>
                <FolderIcon open /><Selected>Folder1</Selected>
              </TreeItem>
            </Tree>
            <NameHeader>Name</NameHeader>
            <FileList>
              <FileItem><GraphIcon />Graph1</FileItem>
              <FileItem><GraphIcon />Graph2</FileItem>
              <FileItem><BookIcon />S15-125-03.dat</FileItem>
            </FileList>
            <Scroll>
              <ScrollButton aria-label="Scroll left"><Chevron dir="left" /></ScrollButton>
              <Thumb $w={15} />
              <ScrollButton aria-label="Scroll right"><Chevron dir="right" /></ScrollButton>
            </Scroll>
          </Explorer>

          <Workspace>
            <GraphPage><Chart /></GraphPage>
            <LayerTabs>
              {['1', '2', '3', '4'].map(n => <LayerTab key={n} $on={n === '3'}>{n}</LayerTab>)}
            </LayerTabs>
            <LogWindow>
              <LogTitle>
                <LogButton aria-label="Pin"><svg width="10" height="9"><path d="M0 4.500h4M4.500 1v7M5 2.500h4.500v4H5" fill="none" stroke="#000" /></svg></LogButton>
                <LogName>Results Log</LogName>
                <LogButton aria-label="Minimize log"><svg width="8" height="8"><path d="M1 6h5v2H1z" /></svg></LogButton>
                <LogButton aria-label="Close log"><Cross /></LogButton>
              </LogTitle>
              <LogBody>
                <LogText>{`[8/6/2009 14:32:31 "" (2455049.605914)
impASC
  Input
    fname = C:\\Program Files\\OriginLab`}</LogText>
                <Scroll $vertical>
                  <ScrollButton aria-label="Scroll up" $off><Chevron dir="up" c="#c4c1b2" /></ScrollButton>
                  <ScrollButton aria-label="Scroll down" $off><Chevron c="#c4c1b2" /></ScrollButton>
                </Scroll>
              </LogBody>
              <LogFoot>
                <Scroll>
                  <ScrollButton aria-label="Scroll log left"><Chevron dir="left" /></ScrollButton>
                  <Thumb $w={118}><svg width="8" height="7"><path d="M.500 0v7M2.500 0v7M4.500 0v7M6.500 0v7" stroke="#8ca4e4" /></svg></Thumb>
                  <ScrollButton aria-label="Scroll log right"><Chevron dir="right" /></ScrollButton>
                </Scroll>
              </LogFoot>
            </LogWindow>
          </Workspace>
        </Body>

        <ToolRow $tall>
          <Bar $gap={2}>
            <Grip />
            <Tools items="pLine+ pDots+ pBoth+ bars+ multi+ box+ area+ polar+ stack" />
          </Bar>
          <Bar $gap={172}>
            <Grip />
            <Tools off items="d3a+ | d3b+ | d3c+ d3d+ mesh+ img prof" />
          </Bar>
          <Bar $end>
            <Grip />
            <Tools off items="alL alR | alT alB | alV alH | szW szH | front back | fntA fntB | group ungroup" />
          </Bar>
        </ToolRow>

        <StatusBar>
          <Status>[S1512503]S15-125-03!(A"Time",D"Position")</Status>
          <Status $w={57}>AU : ON</Status>
          <Status $w={173}>Dark Colors &amp; Light Grids</Status>
          <Status $w={315}>1:[S1512503]S15-125-03!Col("Position")[1:1000]</Status>
          <Status $w={95}>3:[Graph2]3!1</Status>
          <Status $w={51}>Radian</Status>
          <Status $w={22}><svg width="13" height="10"><path d="M11 2h2v2h-2zM8 5h2v2H8zM11 5h2v2h-2zM5 8h2v2H5zM8 8h2v2H8zM11 8h2v2h-2z" fill="#b8b4a2" /></svg></Status>
        </StatusBar>
      </Frame>
    </>
  );
}
